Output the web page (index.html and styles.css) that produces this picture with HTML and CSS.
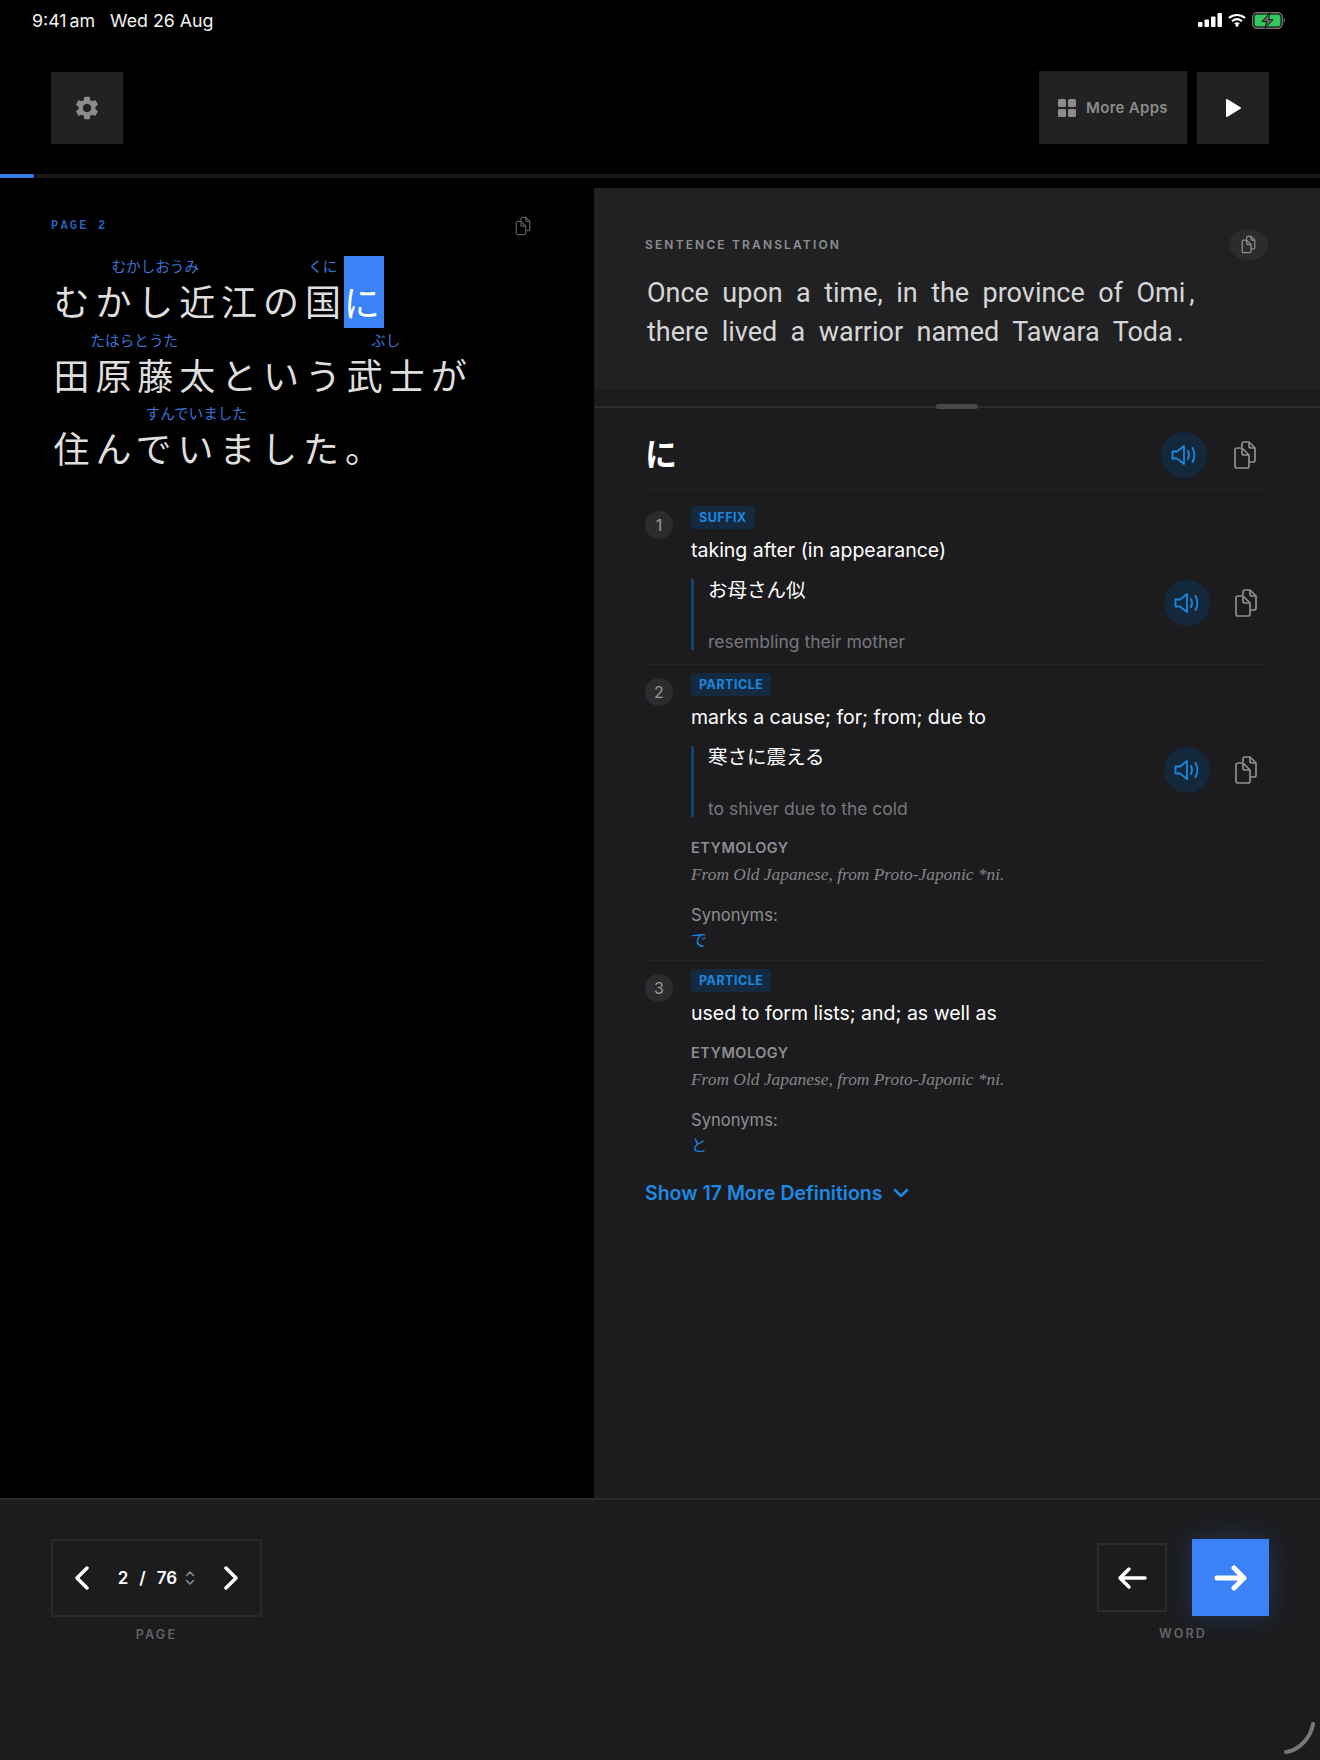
FILE: index.html
```html
<!DOCTYPE html>
<html lang="ja">

<head>
    <title>Reader</title>
    <link rel="stylesheet" href="styles.css">
</head>

<body>
    <!-- shared icons -->
    <svg class="defs">
        <symbol id="copy" viewBox="0 0 24 30">
            <path d="M9 7V4a2 2 0 0 1 2-2h5l6 6v12a2 2 0 0 1-2 2h-4" />
            <path d="M16 2v4a2 2 0 0 0 2 2h4" />
            <path d="M4 8h5l7 7v11a2 2 0 0 1-2 2H4a2 2 0 0 1-2-2V10a2 2 0 0 1 2-2z" />
            <path d="M9 8v5a2 2 0 0 0 2 2h5" />
        </symbol>
        <symbol id="speaker" viewBox="0 0 26 22">
            <path d="M1.500 7.500h4.500l7-5.500v18l-7-5.500H1.500z" />
            <path d="M17 7c1.300 2.500 1.300 5.500 0 8" />
            <path d="M21.500 4c2.500 4.500 2.500 9.500 0 14" />
        </symbol>
    </svg>

    <div class="app">
        <!-- Top -->
        <header class="top">
            <div class="status">
                <div class="status_time"><span class="clock">9:41 am</span><span>Wed 26 Aug</span></div>
                <div class="status_icons">
                    <svg class="signal" viewBox="0 0 24 14">
                        <rect x="0" y="9" width="4.500" height="5" rx="1" />
                        <rect x="6.500" y="6.500" width="4.500" height="7.500" rx="1" />
                        <rect x="13" y="3.500" width="4.500" height="10.500" rx="1" />
                        <rect x="19.500" y="0" width="4.500" height="14" rx="1" />
                    </svg>
                    <svg class="wifi" viewBox="0 0 18 14">
                        <path d="M1 5c4.500-4 11.500-4 16 0" />
                        <path d="M4 8.200c3-2.500 7-2.500 10 0" />
                        <path d="M6.800 11c1.300-1 3.100-1 4.400 0" />
                        <circle cx="9" cy="12.400" r="1.400" class="wifi_dot" />
                    </svg>
                    <svg class="battery" viewBox="0 0 34 17">
                        <rect x="0.700" y="0.700" width="29.600" height="15.600" rx="4.500" class="battery_frame" />
                        <rect x="2.500" y="2.500" width="26" height="12" rx="2.500" class="battery_fill" />
                        <path d="M31.800 5.500c1.400.5 1.400 5.500 0 6" class="battery_cap" />
                        <path d="M18 0.500 10 9.500h4.500l-1.500 7 8-9h-4.500z" class="battery_bolt" />
                    </svg>
                </div>
            </div>
            <div class="toolbar">
                <button class="tool_btn square">
                    <svg class="gear" viewBox="0 0 24 24">
                        <path d="M19.140 12.940c.04-.3.06-.61.06-.94 0-.32-.02-.64-.07-.94l2.030-1.580a.49.49 0 0 0 .12-.61l-1.920-3.320a.488.488 0 0 0-.59-.22l-2.390.96c-.5-.38-1.030-.7-1.620-.94l-.36-2.540a.484.484 0 0 0-.48-.41h-3.840c-.24 0-.43.17-.47.41l-.36 2.540c-.59.24-1.130.57-1.620.94l-2.390-.96c-.22-.08-.47 0-.59.22L2.740 8.870c-.12.21-.08.47.12.61l2.030 1.580c-.05.3-.09.63-.09.94s.02.64.07.94l-2.030 1.580a.49.49 0 0 0-.12.61l1.920 3.320c.12.22.37.29.59.22l2.390-.96c.5.38 1.030.7 1.620.94l.36 2.540c.05.24.24.41.48.41h3.840c.24 0 .44-.17.47-.41l.36-2.540c.59-.24 1.130-.56 1.620-.94l2.390.96c.22.08.47 0 .59-.22l1.920-3.320c.12-.22.07-.47-.12-.61l-2.010-1.580zM12 15.600c-1.980 0-3.600-1.620-3.600-3.600s1.620-3.600 3.600-3.600 3.600 1.620 3.600 3.600-1.620 3.600-3.600 3.600z" />
                    </svg>
                </button>
                <div class="toolbar_right">
                    <button class="tool_btn more_apps">
                        <svg class="grid_icon" viewBox="0 0 18 18">
                            <rect x="0" y="0" width="8" height="8" rx="1.500" />
                            <rect x="10" y="0" width="8" height="8" rx="1.500" />
                            <rect x="0" y="10" width="8" height="8" rx="1.500" />
                            <rect x="10" y="10" width="8" height="8" rx="1.500" />
                        </svg>
                        More Apps
                    </button>
                    <button class="tool_btn square">
                        <svg class="play" viewBox="0 0 17 20">
                            <path d="M2 2 15 10 2 18z" />
                        </svg>
                    </button>
                </div>
            </div>
        </header>

        <div class="progress">
            <div class="progress_fill"></div>
        </div>

        <!-- Main -->
        <main class="main">
            <section class="reader">
                <div class="reader_head">
                    <span class="page_label">PAGE 2</span>
                    <svg class="copy_icon small dim"><use href="#copy" /></svg>
                </div>
                <div class="sentence">
                    <div class="line"><ruby>むかし近江<rt>むかしおうみ</rt></ruby>の<ruby>国<rt>くに</rt></ruby><span class="highlight">に</span></div>
                    <div class="line"><ruby>田原藤太<rt>たはらとうた</rt></ruby>という<ruby>武士<rt>ぶし</rt></ruby>が</div>
                    <div class="line"><ruby>住んでいました<rt>すんでいました</rt></ruby>。</div>
                </div>
            </section>

            <section class="details">
                <div class="translation">
                    <div class="translation_head">
                        <span class="translation_label">SENTENCE TRANSLATION</span>
                        <span class="copy_pill"><svg class="copy_icon tiny"><use href="#copy" /></svg></span>
                    </div>
                    <p class="translation_text">Once upon a time, in the province of Omi<span class="tight">,</span><br>there lived a warrior named Tawara Toda<span class="tight">.</span></p>
                </div>
                <div class="divider"><span class="handle"></span></div>

                <div class="word_block">
                    <div class="word_head">
                        <span class="word">に</span>
                        <div class="actions">
                            <span class="sound_btn"><svg class="speaker_icon"><use href="#speaker" /></svg></span>
                            <svg class="copy_icon"><use href="#copy" /></svg>
                        </div>
                    </div>

                    <!-- 1 -->
                    <div class="def first">
                        <span class="def_num">1</span>
                        <div class="def_body">
                            <span class="tag">SUFFIX</span>
                            <p class="meaning">taking after (in appearance)</p>
                            <div class="example_row">
                                <div class="example">
                                    <span class="example_jp">お母さん似</span>
                                    <span class="example_en">resembling their mother</span>
                                </div>
                                <div class="actions">
                                    <span class="sound_btn"><svg class="speaker_icon"><use href="#speaker" /></svg></span>
                                    <svg class="copy_icon"><use href="#copy" /></svg>
                                </div>
                            </div>
                        </div>
                    </div>

                    <!-- 2 -->
                    <div class="def">
                        <span class="def_num">2</span>
                        <div class="def_body">
                            <span class="tag">PARTICLE</span>
                            <p class="meaning">marks a cause; for; from; due to</p>
                            <div class="example_row">
                                <div class="example">
                                    <span class="example_jp">寒さに震える</span>
                                    <span class="example_en">to shiver due to the cold</span>
                                </div>
                                <div class="actions">
                                    <span class="sound_btn"><svg class="speaker_icon"><use href="#speaker" /></svg></span>
                                    <svg class="copy_icon"><use href="#copy" /></svg>
                                </div>
                            </div>
                            <h4 class="etym_label after_example">ETYMOLOGY</h4>
                            <p class="etym_text">From Old Japanese, from Proto-Japonic *ni.</p>
                            <p class="syn_label">Synonyms:</p>
                            <a class="syn_link">で</a>
                        </div>
                    </div>

                    <!-- 3 -->
                    <div class="def last">
                        <span class="def_num">3</span>
                        <div class="def_body">
                            <span class="tag">PARTICLE</span>
                            <p class="meaning">used to form lists; and; as well as</p>
                            <h4 class="etym_label">ETYMOLOGY</h4>
                            <p class="etym_text">From Old Japanese, from Proto-Japonic *ni.</p>
                            <p class="syn_label">Synonyms:</p>
                            <a class="syn_link">と</a>
                        </div>
                    </div>

                    <a class="show_more">Show 17 More Definitions
                        <svg class="chevron_down" viewBox="0 0 16 10"><path d="M2 2l6 6 6-6" /></svg>
                    </a>
                </div>
            </section>
        </main>

        <!-- Bottom -->
        <footer class="bottom">
            <div class="nav_group">
                <div class="page_box">
                    <svg class="page_arrow" viewBox="0 0 14 24"><path d="M12 2 2 12l10 10" /></svg>
                    <div class="page_count">
                        <span>2</span><span>/</span><span>76</span>
                        <svg class="updown" viewBox="0 0 10 16"><path d="M1.500 5.500 5 2l3.500 3.500M1.500 10.500 5 14l3.500-3.500" /></svg>
                    </div>
                    <svg class="page_arrow" viewBox="0 0 14 24"><path d="M2 2l10 10L2 22" /></svg>
                </div>
                <span class="nav_label">PAGE</span>
            </div>
            <div class="nav_group">
                <div class="word_btns">
                    <button class="back_btn">
                        <svg class="back_arrow" viewBox="0 0 30 24"><path d="M28 12H3M12 3l-9 9 9 9" /></svg>
                    </button>
                    <button class="next_btn">
                        <svg class="next_arrow" viewBox="0 0 34 26"><path d="M3 13h27M20 3l10 10-10 10" /></svg>
                    </button>
                </div>
                <span class="nav_label">WORD</span>
            </div>
            <svg class="corner_arc" viewBox="0 0 32 32"><path d="M30 2C28 15 17 28 3 30" /></svg>
        </footer>
    </div>
</body>

</html>
```

FILE: styles.css
```css
* {
    margin: 0;
    padding: 0;
    box-sizing: border-box;
}

body {
    background-color: #000;
    color: #fff;
    font-family: "Inter", "Noto Sans CJK JP", sans-serif;
}

button {
    border: none;
    font-family: inherit;
    display: flex;
    align-items: center;
    justify-content: center;
}

.defs {
    display: none;
}

.app {
    width: 1320px;
    height: 1760px;
    display: flex;
    flex-direction: column;
    overflow: hidden;
}

/* Top */
.top {
    height: 174px;
}

.status {
    height: 40px;
    padding: 0 34px 0 32px;
    display: flex;
    justify-content: space-between;
    align-items: center;
}

.status_time {
    display: flex;
    gap: 15px;
    font-size: 17.800px;
    color: #f2f2f2;
}

.clock {
    word-spacing: -2px;
}

.status_icons {
    display: flex;
    align-items: center;
    gap: 6px;
}

.signal {
    width: 24px;
    height: 14px;
    fill: #fff;
}

.wifi {
    width: 18px;
    height: 14px;
    fill: none;
    stroke: #fff;
    stroke-width: 2;
}

.wifi_dot {
    fill: #fff;
    stroke: none;
}

.battery {
    width: 34px;
    height: 17px;
}

.battery_frame {
    fill: none;
    stroke: #777;
    stroke-width: 1.400;
}

.battery_fill {
    fill: #34c759;
}

.battery_cap {
    fill: #777;
}

.battery_bolt {
    fill: #666;
    stroke: #000;
    stroke-width: 0.800;
}

.toolbar {
    padding: 31px 51px 0;
    display: flex;
    justify-content: space-between;
    align-items: center;
}

.toolbar_right {
    display: flex;
    align-items: center;
    gap: 10px;
}

.tool_btn {
    height: 72px;
    background-color: #222;
    color: #8c8c8c;
}

.square {
    width: 72px;
}

.more_apps {
    width: 148px;
    height: 73px;
    gap: 10px;
    font-size: 15px;
    font-weight: 600;
    letter-spacing: 0.300px;
}

.gear {
    width: 28px;
    height: 28px;
    fill: #8c8c8c;
}

.grid_icon {
    width: 18px;
    height: 18px;
    fill: #8c8c8c;
}

.play {
    width: 17px;
    height: 20px;
    fill: #fff;
    stroke: #fff;
    stroke-width: 2;
    stroke-linejoin: round;
}

.progress {
    height: 4px;
    background-color: #1a1a1c;
}

.progress_fill {
    width: 34px;
    height: 4px;
    background-color: #3b7de8;
    border-radius: 0 2px 2px 0;
}

/* Main */
.main {
    margin-top: 10px;
    height: 1310px;
    display: flex;
}

.reader {
    width: 594px;
    padding: 28px 63px 0 51px;
}

.reader_head {
    display: flex;
    justify-content: space-between;
    align-items: center;
    height: 20px;
}

.page_label {
    font-family: "Liberation Mono", monospace;
    font-size: 12px;
    font-weight: 700;
    letter-spacing: 2.200px;
    color: #2a5fb5;
}

.sentence {
    margin-top: 22px;
}

.line {
    height: 73.500px;
    padding-left: 2.500px;
    font-size: 36px;
    line-height: 73.500px;
    letter-spacing: 5.900px;
    color: #dedede;
    white-space: nowrap;
}

.line ruby {
    ruby-align: center;
}

.line rt {
    font-size: 14.600px;
    letter-spacing: 0;
    line-height: 16px;
    padding-bottom: 8px;
    padding-right: 6px;
    color: #3a73d6;
}

.highlight {
    background-color: #3b82f6;
    color: #fff;
    padding: 25.500px 0 3px 0;
    margin-left: -3px;
    letter-spacing: 4px;
}

.details {
    flex: 1;
    background-color: #1c1c1e;
    display: flex;
    flex-direction: column;
}

.translation {
    height: 202px;
    padding: 41px 52px 0 51px;
    background-color: #212124;
}

.translation_head {
    display: flex;
    justify-content: space-between;
    align-items: center;
}

.translation_label {
    font-size: 12px;
    font-weight: 600;
    letter-spacing: 2.150px;
    color: #8e8e93;
}

.copy_pill {
    width: 39px;
    height: 31px;
    border-radius: 50%;
    background-color: #2c2c2f;
    display: flex;
    align-items: center;
    justify-content: center;
}

.translation_text {
    margin: 14px 0 0 2px;
    font-family: "Roboto", sans-serif;
    font-size: 27px;
    line-height: 39px;
    word-spacing: 6.700px;
    color: #d6d6d6;
    white-space: nowrap;
}

.tight {
    margin-left: 4px;
}

.divider {
    margin-top: 16px;
    height: 2px;
    background-color: #2c2c2e;
    position: relative;
}

.handle {
    position: absolute;
    left: 342px;
    top: -2px;
    width: 42px;
    height: 5px;
    border-radius: 3px;
    background-color: #48484a;
}

.word_block {
    padding: 0 55px 0 51px;
}

.word_head {
    padding: 24px 8px 11px 0;
    display: flex;
    justify-content: space-between;
    align-items: center;
    border-bottom: 1px solid #262628;
}

.word {
    font-size: 32px;
    font-weight: 700;
    line-height: 46px;
}

.actions {
    display: flex;
    align-items: center;
    gap: 24px;
}

.word_head .actions {
    gap: 26px;
}

.sound_btn {
    width: 46px;
    height: 46px;
    border-radius: 50%;
    background-color: #14283b;
    display: flex;
    align-items: center;
    justify-content: center;
}

.speaker_icon {
    width: 26px;
    height: 22px;
    fill: none;
    stroke: #1b88e0;
    stroke-width: 1.800;
    stroke-linejoin: round;
    stroke-linecap: round;
}

.copy_icon {
    width: 24px;
    height: 30px;
    fill: none;
    stroke: #8e8e8e;
    stroke-width: 1.700;
    stroke-linejoin: round;
    flex-shrink: 0;
}

.copy_icon.small {
    width: 16px;
    height: 20px;
    stroke-width: 2;
}

.copy_icon.tiny {
    width: 15px;
    height: 19px;
    stroke-width: 2;
}

.copy_icon.dim {
    stroke: #555;
}

/* Definitions */
.def {
    display: flex;
    gap: 18px;
    padding: 8px 0 9px;
    border-bottom: 1px solid #242426;
}

.def.first {
    padding: 16px 0 14px;
}

.def.last {
    border-bottom: none;
}

.def_num {
    width: 28px;
    height: 28px;
    margin-top: 5px;
    border-radius: 50%;
    background-color: #2c2c2e;
    color: #98989d;
    font-size: 16px;
    display: flex;
    align-items: center;
    justify-content: center;
    flex-shrink: 0;
}

.def_body {
    flex: 1;
}

.tag {
    display: inline-block;
    height: 23px;
    padding: 0 8px;
    border-radius: 4px;
    background-color: #152a3f;
    color: #1b88e0;
    font-size: 12.500px;
    font-weight: 700;
    line-height: 23px;
    letter-spacing: 0.500px;
    vertical-align: top;
}

.meaning {
    margin-top: 8px;
    font-size: 19.500px;
    line-height: 26px;
    color: #fff;
}

.example_row {
    margin-top: 16px;
    padding-right: 7px;
    display: flex;
    justify-content: space-between;
    align-items: flex-start;
}

.example_row .actions {
    margin-top: 1px;
}

.example {
    height: 71px;
    padding: 1px 0 0 14px;
    border-left: 3px solid #15426e;
    display: flex;
    flex-direction: column;
    justify-content: space-between;
}

.example_jp {
    font-size: 19.500px;
    line-height: 20px;
}

.example_en {
    margin-bottom: -3px;
    font-size: 17.500px;
    line-height: 22px;
    color: #77777c;
}

.etym_label {
    margin-top: 17px;
    font-size: 14.500px;
    font-weight: 600;
    line-height: 20px;
    letter-spacing: 0.500px;
    color: #8e8e93;
}

.etym_label.after_example {
    margin-top: 21px;
}

.etym_text {
    margin-top: 3px;
    font-family: "Liberation Serif", serif;
    font-style: italic;
    font-size: 17.400px;
    line-height: 26px;
    color: #85858a;
}

.syn_label {
    margin-top: 17px;
    font-size: 16.600px;
    line-height: 22px;
    color: #8e8e93;
}

.syn_link {
    display: block;
    margin-top: 3px;
    font-size: 16px;
    line-height: 22px;
    color: #1b88e0;
}

.show_more {
    display: flex;
    align-items: center;
    gap: 11px;
    margin-top: 14px;
    font-size: 19.500px;
    font-weight: 600;
    line-height: 28px;
    color: #1a8ae5;
}

.chevron_down {
    width: 16px;
    height: 10px;
    fill: none;
    stroke: #1a8ae5;
    stroke-width: 2.500;
    stroke-linecap: round;
    stroke-linejoin: round;
}

/* Bottom */
.bottom {
    flex: 1;
    position: relative;
    padding: 39px 51px 0;
    display: flex;
    justify-content: space-between;
    align-items: flex-start;
    background-color: #1c1c1e;
    border-top: 2px solid #2a2a2c;
}

.nav_group {
    display: flex;
    flex-direction: column;
    align-items: center;
}

.page_box {
    width: 211px;
    height: 78px;
    padding: 0 22px;
    border: 2px solid #29292b;
    display: flex;
    justify-content: space-between;
    align-items: center;
}

.page_arrow {
    width: 14px;
    height: 24px;
    fill: none;
    stroke: #fff;
    stroke-width: 3.500;
    stroke-linecap: round;
    stroke-linejoin: round;
}

.page_count {
    display: flex;
    align-items: center;
    gap: 11px;
    font-size: 17px;
    font-weight: 600;
}

.updown {
    width: 10px;
    height: 16px;
    margin-left: -3px;
    fill: none;
    stroke: #8e8e93;
    stroke-width: 1.500;
    stroke-linecap: round;
    stroke-linejoin: round;
}

.nav_label {
    margin-top: 9px;
    font-size: 12.500px;
    font-weight: 600;
    line-height: 18px;
    letter-spacing: 2.200px;
    color: #636366;
}

.word_btns {
    display: flex;
    align-items: center;
    gap: 25px;
}

.back_btn {
    width: 70px;
    height: 69px;
    background: none;
    border: 2px solid #2c2c2e;
}

.next_btn {
    width: 77px;
    height: 77px;
    background-color: #3b82f6;
    box-shadow: 0 0 24px rgba(59, 130, 246, 0.25);
}

.back_arrow {
    width: 30px;
    height: 24px;
    fill: none;
    stroke: #fff;
    stroke-width: 3.500;
    stroke-linecap: round;
    stroke-linejoin: round;
}

.next_arrow {
    width: 34px;
    height: 26px;
    fill: none;
    stroke: #fff;
    stroke-width: 5;
    stroke-linecap: round;
    stroke-linejoin: round;
}

.corner_arc {
    position: absolute;
    right: 5px;
    bottom: 6px;
    width: 32px;
    height: 32px;
    fill: none;
    stroke: #77777a;
    stroke-width: 4;
    stroke-linecap: round;
}
```
